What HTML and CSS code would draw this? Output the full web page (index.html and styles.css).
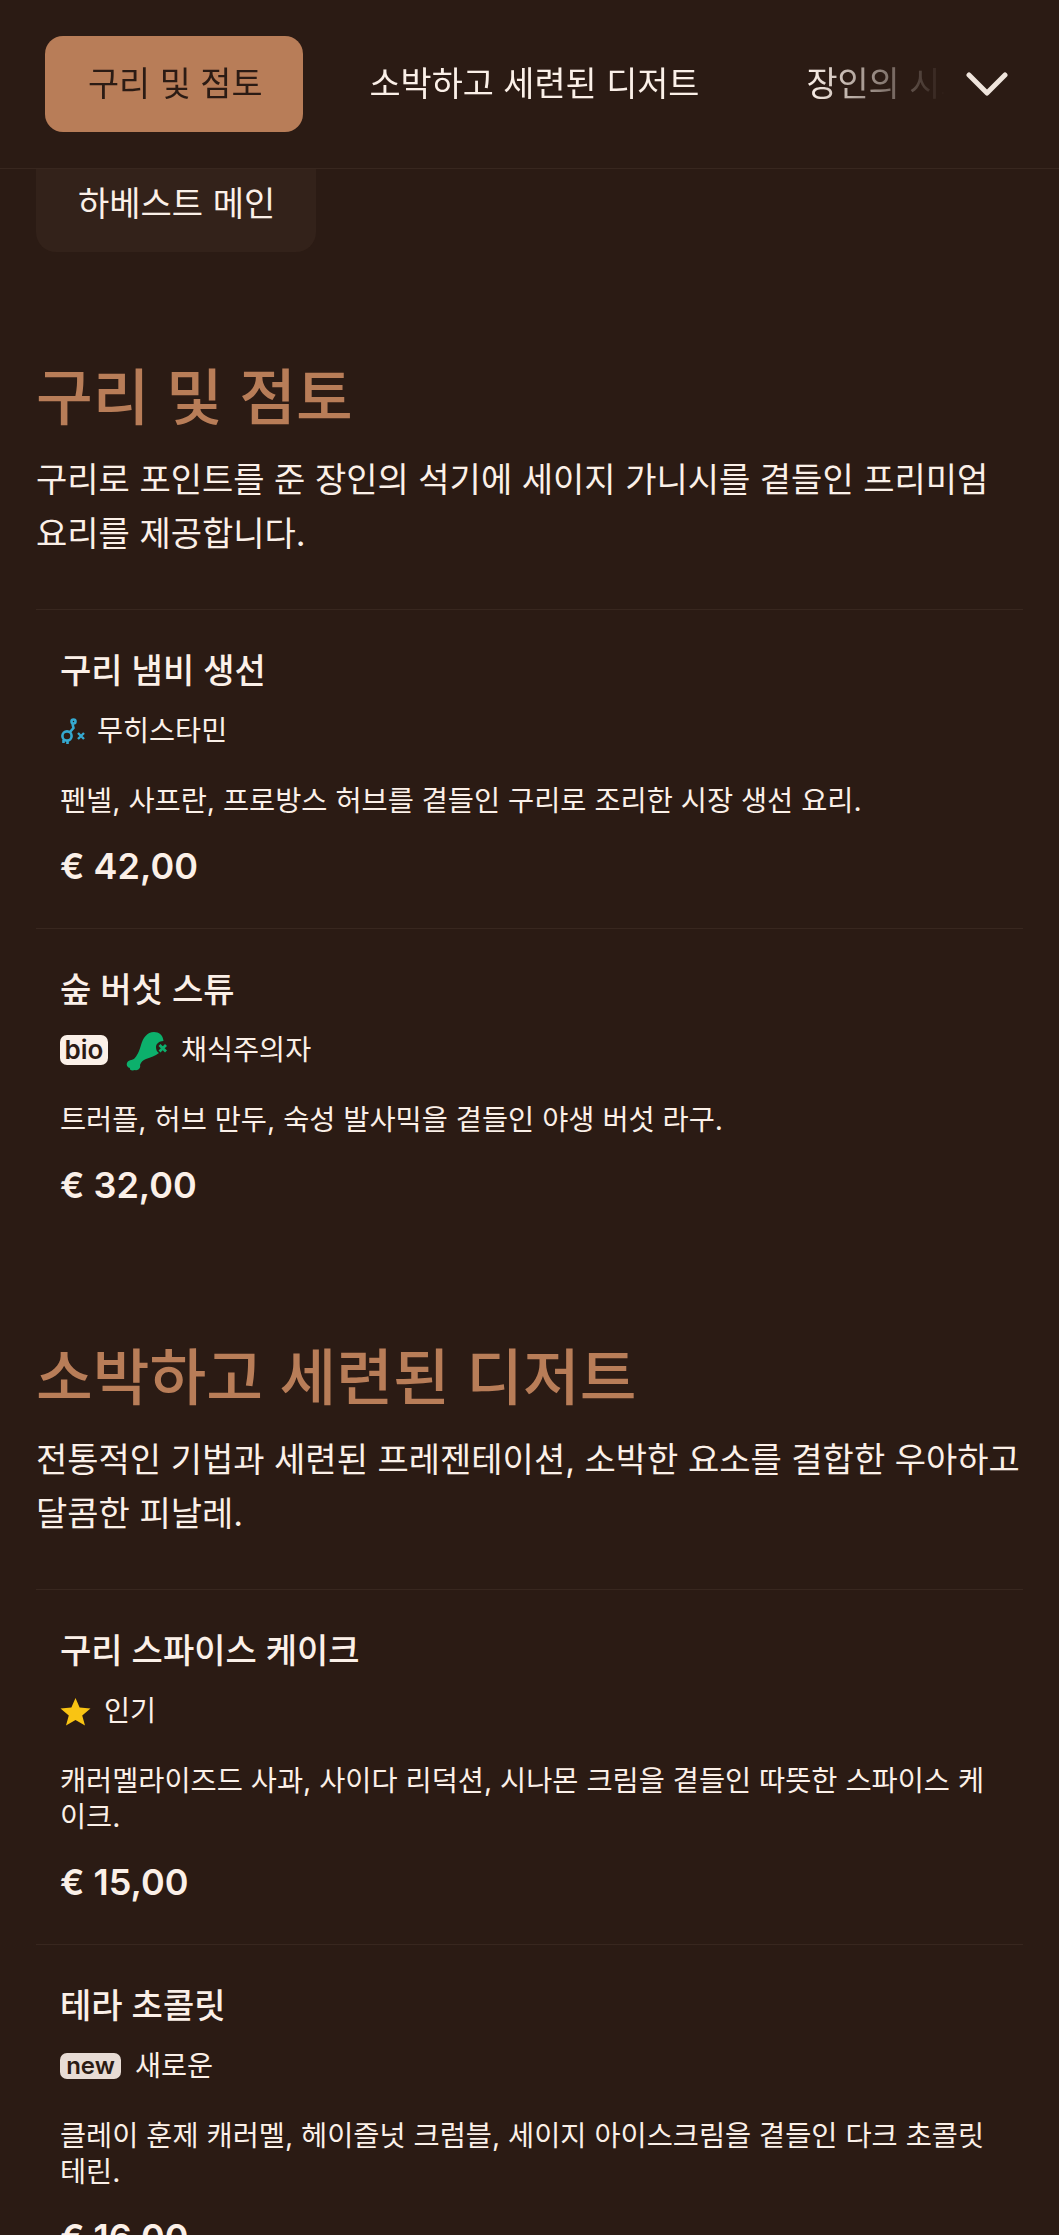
FILE: index.html
```html
<!DOCTYPE html>
<html lang="ko">
<head>
<meta charset="utf-8">
<title>메뉴</title>
<link rel="stylesheet" href="styles.css">
</head>
<body>
<div class="page">
  <header class="topbar">
    <nav class="tabs">
      <a class="tab tab-active">구리 및 점토</a>
      <a class="tab">소박하고 세련된 디저트</a>
      <a class="tab">장인의 시그니처</a>
    </nav>
    <svg class="chevron" viewBox="0 0 42 24" aria-hidden="true"><path d="M3 3 L21 21 L39 3" fill="none" stroke="#efe4dc" stroke-width="5" stroke-linecap="round" stroke-linejoin="round"/></svg>
  </header>
  <div class="subtabs"><a class="subtab">하베스트 메인</a></div>

  <main>
    <section class="section section-first">
      <h2 class="section-title">구리 및 점토</h2>
      <p class="section-desc">구리로 포인트를 준 장인의 석기에 세이지 가니시를 곁들인 프리미엄 요리를 제공합니다.</p>
      <article class="item">
        <h3 class="item-title">구리 냄비 생선</h3>
        <div class="tags">
          <svg class="icon-hist" viewBox="0 0 25 26" aria-hidden="true"><g fill="none" stroke="#35a9d0" stroke-width="2.6"><circle cx="7" cy="18" r="4.6"/><path d="M10 14 L13.5 10 L12.5 6"/><circle cx="13.5" cy="3.5" r="2"/><path d="M3.5 22 L3.5 25 M7.5 23 L7.5 26"/></g><path d="M18 15 L24 21 M24 15 L18 21" stroke="#35a9d0" stroke-width="2.4"/></svg>
          <span class="tag-label">무히스타민</span>
        </div>
        <p class="item-desc">펜넬, 사프란, 프로방스 허브를 곁들인 구리로 조리한 시장 생선 요리.</p>
        <div class="price">€ 42,00</div>
      </article>
      <article class="item">
        <h3 class="item-title">숲 버섯 스튜</h3>
        <div class="tags">
          <span class="badge badge-bio">bio</span>
          <svg class="icon-leg" viewBox="0 0 42 39" aria-hidden="true"><path d="M1 31 C2 28 6 28 8 27 C11 24 13 20 15 13 C17 6 21 0 28 0 C33 0 37 3 37.5 9 C33 9 30 12 30 15 C30 18 31 20 33 21 C29 24 25 25 20 27 C17 28 15 30 14 33 C15 36 12 39 9 38 C6 39 3 38 4 36 C2 36 0 33 1 31 Z" fill="#0cb06c"/><path d="M33.5 13 L40 19.5 M40 13 L33.5 19.5" stroke="#0cb06c" stroke-width="2.8"/></svg>
          <span class="tag-label">채식주의자</span>
        </div>
        <p class="item-desc">트러플, 허브 만두, 숙성 발사믹을 곁들인 야생 버섯 라구.</p>
        <div class="price">€ 32,00</div>
      </article>
    </section>

    <section class="section">
      <h2 class="section-title">소박하고 세련된 디저트</h2>
      <p class="section-desc">전통적인 기법과 세련된 프레젠테이션, 소박한 요소를 결합한 우아하고 달콤한 피날레.</p>
      <article class="item">
        <h3 class="item-title">구리 스파이스 케이크</h3>
        <div class="tags">
          <svg class="icon-star" viewBox="0 0 30 28" aria-hidden="true"><path d="M15 1 L19 10.2 L29.5 11 L21.5 17.8 L24.2 27.5 L15 22.3 L5.8 27.5 L8.5 17.8 L0.5 11 L11 10.2 Z" fill="#f9c413"/></svg>
          <span class="tag-label">인기</span>
        </div>
        <p class="item-desc">캐러멜라이즈드 사과, 사이다 리덕션, 시나몬 크림을 곁들인 따뜻한 스파이스 케이크.</p>
        <div class="price">€ 15,00</div>
      </article>
      <article class="item">
        <h3 class="item-title">테라 초콜릿</h3>
        <div class="tags">
          <span class="badge badge-new">new</span>
          <span class="tag-label">새로운</span>
        </div>
        <p class="item-desc">클레이 훈제 캐러멜, 헤이즐넛 크럼블, 세이지 아이스크림을 곁들인 다크 초콜릿 테린.</p>
        <div class="price">€ 16,00</div>
      </article>
    </section>
  </main>
</div>
</body>
</html>
```
FILE: styles.css
```css
* { box-sizing: border-box; }
html, body { margin: 0; padding: 0; background: #2b1b14; }
body {
  color: #fbf0e8;
  font-family: Inter, "Noto Sans CJK KR", "Noto Sans", sans-serif;
}
.page { height: 2235px; overflow: hidden; }

.topbar {
  display: flex;
  align-items: flex-start;
  height: 169px;
  padding: 36px 0 0 45px;
  border-bottom: 1px solid #38271f;
}
.tabs {
  display: flex;
  gap: 23px;
  width: 900px;
  overflow: hidden;
  -webkit-mask-image: linear-gradient(to right, #000 85%, transparent 100%);
  mask-image: linear-gradient(to right, #000 85%, transparent 100%);
}
.tab {
  flex: none;
  height: 96px;
  padding: 0 41px 0 43px;
  line-height: 95px;
  font-size: 33.8px;
  border-radius: 18px;
  white-space: nowrap;
}
.tab-active { background: #b87d58; color: #2b1b14; }
.chevron { width: 42px; height: 24px; margin: 36px 0 0 21px; flex: none; }

.subtabs { padding: 0 36px; }
.subtab {
  display: block;
  width: 280px;
  height: 83px;
  padding-left: 42px;
  line-height: 69px;
  font-size: 34px;
  background: #33221a;
  border-radius: 0 0 20px 20px;
}

.section { padding: 0 36px; margin-top: 95px; }
.section-first { margin-top: 110px; }
.section-title {
  margin: 0;
  font-size: 61.7px;
  line-height: 72px;
  font-weight: 500;
  color: #b87d58;
}
.section-desc {
  margin: 19px 0 48px;
  font-size: 34px;
  line-height: 54px;
}
.item {
  padding: 39px 24px 40px;
  border-top: 1px solid #38271f;
}
.item-title {
  margin: 0;
  font-size: 34px;
  line-height: 44px;
  font-weight: 500;
}
.tags {
  display: flex;
  align-items: center;
  height: 30px;
  margin-top: 23px;
}
.tag-label { font-size: 28.3px; line-height: 30px; }
.icon-hist { width: 25px; height: 26px; margin-right: 12px; }
.icon-leg { width: 42px; height: 39px; margin: 2px 13px 0 18px; }
.icon-star { width: 31px; height: 29px; margin-right: 13px; }
.badge {
  display: block;
  font-weight: 600;
  color: #2b1b14;
  text-align: center;
}
.badge-bio {
  width: 48px; height: 30px;
  line-height: 30px;
  font-size: 26px;
  background: #fbf0e8;
  border-radius: 7px;
}
.badge-new {
  width: 61px; height: 26px;
  line-height: 25px;
  font-size: 24px;
  background: #e8dcd5;
  border-radius: 7px;
  margin-right: 14px;
}
.item-desc {
  margin: 37px 0 0;
  font-size: 28.4px;
  line-height: 36px;
}
.price {
  margin-top: 25px;
  font-size: 36px;
  line-height: 44px;
  font-weight: 600;
}
```
